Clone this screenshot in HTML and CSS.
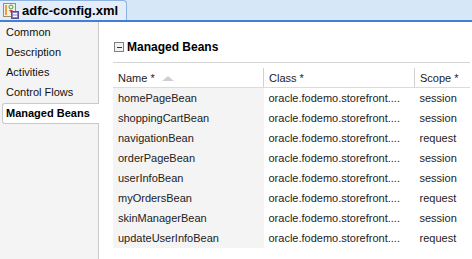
FILE: index.html
```html
<!DOCTYPE html>
<html lang="en">
<head>
    <meta charset="UTF-8">
    <title>adfc-config.xml</title>
    <link rel="stylesheet" href="styles.css">
</head>
<body>
    <div class="tabbar">
        <div class="tab">
            <svg class="tab-icon" width="16" height="16" viewBox="0 0 16 16">
                <rect x="0.5" y="0.5" width="12" height="13" fill="#f4f1e4" stroke="#9a8f6a"/>
                <rect x="2" y="2" width="2" height="10" fill="#e6a24a"/>
                <circle cx="8" cy="4" r="2" fill="none" stroke="#3aa04a"/>
                <path d="M6 7 L10 7 L8 10 Z" fill="#d04a3a"/>
                <rect x="8.5" y="8.5" width="7" height="7" fill="#8d7fc0" stroke="#5a4e8f"/>
                <path d="M10 10.5 H14 M10 12 H14 M10 13.5 H14" stroke="#fff"/>
            </svg>
            <span>adfc-config.xml</span>
        </div>
    </div>

    <div class="editor">
        <div class="sidebar">
            <div class="nav-item">Common</div>
            <div class="nav-item">Description</div>
            <div class="nav-item">Activities</div>
            <div class="nav-item">Control Flows</div>
            <div class="nav-item active">Managed Beans</div>
        </div>

        <div class="main">
            <div class="section-title">
                <span class="toggle"></span>
                <span>Managed Beans</span>
            </div>

            <table class="beans">
                <thead>
                    <tr>
                        <th class="col-name">Name * <span class="sort"></span></th>
                        <th class="col-class">Class *</th>
                        <th class="col-scope">Scope *</th>
                    </tr>
                </thead>
                <tbody>
                    <tr><td class="col-name">homePageBean</td><td>oracle.fodemo.storefront....</td><td>session</td></tr>
                    <tr><td class="col-name">shoppingCartBean</td><td>oracle.fodemo.storefront....</td><td>session</td></tr>
                    <tr><td class="col-name">navigationBean</td><td>oracle.fodemo.storefront....</td><td>request</td></tr>
                    <tr><td class="col-name">orderPageBean</td><td>oracle.fodemo.storefront....</td><td>session</td></tr>
                    <tr><td class="col-name">userInfoBean</td><td>oracle.fodemo.storefront....</td><td>session</td></tr>
                    <tr><td class="col-name">myOrdersBean</td><td>oracle.fodemo.storefront....</td><td>request</td></tr>
                    <tr><td class="col-name">skinManagerBean</td><td>oracle.fodemo.storefront....</td><td>session</td></tr>
                    <tr><td class="col-name">updateUserInfoBean</td><td>oracle.fodemo.storefront....</td><td>request</td></tr>
                </tbody>
            </table>
        </div>
    </div>
</body>
</html>
```

FILE: styles.css
```css
body {
    margin: 0;
    font-family: "Liberation Sans", Arial, sans-serif;
    font-size: 11px;
    color: #111;
    background-color: #fff;
    width: 472px;
    height: 259px;
    overflow: hidden;
}

.tabbar {
    height: 20px;
    background-color: #d6e8f7;
    border-bottom: 2px solid #3f7fd9;
    display: flex;
    align-items: flex-end;
}

.tab {
    width: 127px;
    height: 20px;
    box-sizing: border-box;
    display: flex;
    align-items: center;
    gap: 3px;
    padding-left: 3px;
    background-color: #e3eefa;
    border-right: 1px solid #8eb3e3;
    border-top: 1px solid #8eb3e3;
    border-top-right-radius: 4px;
    font-weight: bold;
    font-size: 13px;
    color: #000;
    white-space: nowrap;
}

.tab-icon {
    flex: none;
}

.editor {
    display: flex;
    height: 237px;
}

.sidebar {
    width: 98px;
    flex: none;
    background-color: #f4f4f4;
    border-right: 1px solid #c9c9c9;
}

.nav-item {
    height: 20px;
    line-height: 20px;
    padding-left: 6px;
    white-space: nowrap;
    color: #111;
}

.nav-item.active {
    height: 19px;
    line-height: 18px;
    margin-top: 1px;
    margin-left: 2px;
    margin-right: -1px;
    padding-left: 3px;
    background-color: #fff;
    border: 1px solid #c9c9c9;
    border-right: none;
    border-radius: 3px 0 0 3px;
    font-weight: bold;
    color: #000;
}

.main {
    flex: 1;
    padding: 0 2px 0 14px;
}

.section-title {
    display: flex;
    align-items: center;
    gap: 3px;
    height: 41px;
    padding-top: 9px;
    padding-left: 1px;
    border-bottom: 1px solid #d4d4d4;
    box-sizing: border-box;
    font-weight: bold;
    font-size: 12px;
    color: #000;
}

.toggle {
    width: 8px;
    height: 8px;
    border: 1px solid #808080;
    background-color: #f2f2f2;
    position: relative;
}

.toggle::after {
    content: "";
    position: absolute;
    left: 2px;
    top: 4px;
    width: 5px;
    height: 1px;
    background-color: #333;
}

.beans {
    margin-top: 5px;
    border-collapse: collapse;
    table-layout: fixed;
    width: 357px;
}

.beans th {
    height: 19px;
    padding: 0 5px;
    text-align: left;
    font-weight: normal;
    color: #222;
    border-bottom: 1px solid #dcdcdc;
    border-left: 1px solid #d0d0d0;
    white-space: nowrap;
}

.beans th:first-child {
    border-left: none;
}

.beans td {
    height: 20px;
    padding: 0 5px;
    white-space: nowrap;
    color: #222;
}

.beans .col-name {
    width: 140px;
}

.beans .col-class {
    width: 140px;
}

.beans td.col-name {
    background-color: #f4f4f4;
}

.sort {
    display: inline-block;
    width: 0;
    height: 0;
    margin-left: 4px;
    vertical-align: 1px;
    border-left: 6px solid transparent;
    border-right: 6px solid transparent;
    border-bottom: 5px solid #cfcfcf;
}
```
